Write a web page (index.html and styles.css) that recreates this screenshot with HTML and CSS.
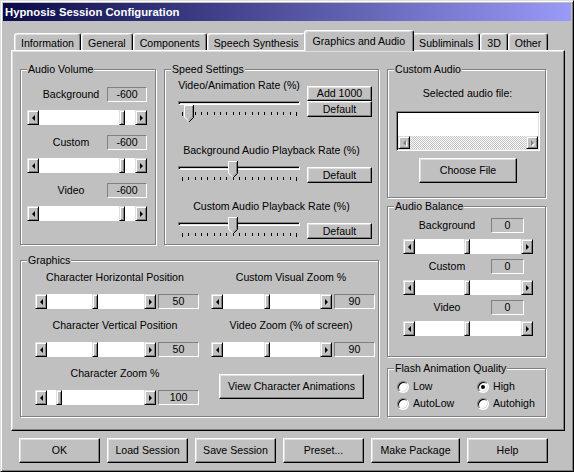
FILE: index.html
```html
<!DOCTYPE html>
<html>
<head>
<meta charset="utf-8">
<title>Hypnosis Session Configuration</title>
<link rel="stylesheet" href="styles.css">
</head>
<body>
<div class="window">
  <div class="titlebar">Hypnosis Session Configuration</div>
  <div class="dialog">
    <div class="tabs">
      <div class="tab">Information</div>
      <div class="tab">General</div>
      <div class="tab">Components</div>
      <div class="tab">Speech Synthesis</div>
      <div class="tab active">Graphics and Audio</div>
      <div class="tab">Subliminals</div>
      <div class="tab">3D</div>
      <div class="tab">Other</div>
    </div>
    <div class="panel">
      <div class="col-left">
        <div class="row-top">
          <div class="group volume">
            <span class="legend">Audio Volume</span>
            <div class="vol-item">
              <div class="vol-head"><span class="vol-label">Background</span><span class="val">-600</span></div>
              <div class="hscroll w120"><span class="sbtn sl"></span><span class="track"><span class="thumb" style="margin-left:80px"></span></span><span class="sbtn sr"></span></div>
            </div>
            <div class="vol-item">
              <div class="vol-head"><span class="vol-label">Custom</span><span class="val">-600</span></div>
              <div class="hscroll w120"><span class="sbtn sl"></span><span class="track"><span class="thumb" style="margin-left:80px"></span></span><span class="sbtn sr"></span></div>
            </div>
            <div class="vol-item">
              <div class="vol-head"><span class="vol-label">Video</span><span class="val">-600</span></div>
              <div class="hscroll w120"><span class="sbtn sl"></span><span class="track"><span class="thumb" style="margin-left:80px"></span></span><span class="sbtn sr"></span></div>
            </div>
          </div>
          <div class="group speed">
            <span class="legend">Speed Settings</span>
            <div class="sp-grid">
              <div>
                <div class="sp-label">Video/Animation Rate (%)</div>
                <div class="track-area">
                  <div class="channel"></div>
                  <svg class="ticks" width="116" height="4" viewBox="0 0 116 4"><path d="M0.5 0v4M6.5 0v3M13.5 0v3M19.5 0v3M25.5 0v3M32.5 0v3M38.5 0v3M44.5 0v3M51.5 0v3M57.5 0v3M63.5 0v3M70.5 0v3M76.5 0v3M82.5 0v3M89.5 0v3M95.5 0v3M101.5 0v3M108.5 0v3M114.5 0v4" stroke="#000"/></svg>
                  <svg class="tthumb" style="left:9px" width="10" height="17" viewBox="0 0 10 17"><path d="M0 0H10V12L5 17L0 12Z" fill="#c0c0c0"/><path d="M0.5 12.5V0.5H9" fill="none" stroke="#fff"/><path d="M0.5 12L5 16.5" fill="none" stroke="#fff"/><path d="M9.5 0V12.5L5 17" fill="none" stroke="#000"/><path d="M8.5 1V12L5 15.5" fill="none" stroke="#808080"/></svg>
                </div>
              </div>
              <div class="btn-stack">
                <div class="btn b15">Add 1000</div>
                <div class="btn b16">Default</div>
              </div>
            </div>
            <div class="sp-row">
              <div class="sp-label">Background Audio Playback Rate (%)</div>
              <div class="sp-grid">
                <div class="track-area">
                  <div class="channel"></div>
                  <svg class="ticks" width="116" height="4" viewBox="0 0 116 4"><path d="M0.5 0v4M6.5 0v3M13.5 0v3M19.5 0v3M25.5 0v3M32.5 0v3M38.5 0v3M44.5 0v3M51.5 0v3M57.5 0v3M63.5 0v3M70.5 0v3M76.5 0v3M82.5 0v3M89.5 0v3M95.5 0v3M101.5 0v3M108.5 0v3M114.5 0v4" stroke="#000"/></svg>
                  <svg class="tthumb" style="left:53px" width="10" height="17" viewBox="0 0 10 17"><path d="M0 0H10V12L5 17L0 12Z" fill="#c0c0c0"/><path d="M0.5 12.5V0.5H9" fill="none" stroke="#fff"/><path d="M0.5 12L5 16.5" fill="none" stroke="#fff"/><path d="M9.5 0V12.5L5 17" fill="none" stroke="#000"/><path d="M8.5 1V12L5 15.5" fill="none" stroke="#808080"/></svg>
                </div>
                <div class="btn-single"><div class="btn b16">Default</div></div>
              </div>
            </div>
            <div class="sp-row">
              <div class="sp-label">Custom Audio Playback Rate (%)</div>
              <div class="sp-grid">
                <div class="track-area">
                  <div class="channel"></div>
                  <svg class="ticks" width="116" height="4" viewBox="0 0 116 4"><path d="M0.5 0v4M6.5 0v3M13.5 0v3M19.5 0v3M25.5 0v3M32.5 0v3M38.5 0v3M44.5 0v3M51.5 0v3M57.5 0v3M63.5 0v3M70.5 0v3M76.5 0v3M82.5 0v3M89.5 0v3M95.5 0v3M101.5 0v3M108.5 0v3M114.5 0v4" stroke="#000"/></svg>
                  <svg class="tthumb" style="left:53px" width="10" height="17" viewBox="0 0 10 17"><path d="M0 0H10V12L5 17L0 12Z" fill="#c0c0c0"/><path d="M0.5 12.5V0.5H9" fill="none" stroke="#fff"/><path d="M0.5 12L5 16.5" fill="none" stroke="#fff"/><path d="M9.5 0V12.5L5 17" fill="none" stroke="#000"/><path d="M8.5 1V12L5 15.5" fill="none" stroke="#808080"/></svg>
                </div>
                <div class="btn-single"><div class="btn b16">Default</div></div>
              </div>
            </div>
          </div>
        </div>
        <div class="group graphics">
          <span class="legend">Graphics</span>
          <div class="g-cell">
            <div class="g-label">Character Horizontal Position</div>
            <div class="g-ctrl"><div class="hscroll"><span class="sbtn sl"></span><span class="track"><span class="thumb" style="margin-left:45px"></span></span><span class="sbtn sr"></span></div><span class="val">50</span></div>
          </div>
          <div class="g-cell">
            <div class="g-label">Custom Visual Zoom %</div>
            <div class="g-ctrl"><div class="hscroll"><span class="sbtn sl"></span><span class="track"><span class="thumb" style="margin-left:41px"></span></span><span class="sbtn sr"></span></div><span class="val">90</span></div>
          </div>
          <div class="g-cell">
            <div class="g-label">Character Vertical Position</div>
            <div class="g-ctrl"><div class="hscroll"><span class="sbtn sl"></span><span class="track"><span class="thumb" style="margin-left:45px"></span></span><span class="sbtn sr"></span></div><span class="val">50</span></div>
          </div>
          <div class="g-cell">
            <div class="g-label">Video Zoom (% of screen)</div>
            <div class="g-ctrl"><div class="hscroll"><span class="sbtn sl"></span><span class="track"><span class="thumb" style="margin-left:41px"></span></span><span class="sbtn sr"></span></div><span class="val">90</span></div>
          </div>
          <div class="g-cell">
            <div class="g-label">Character Zoom %</div>
            <div class="g-ctrl"><div class="hscroll"><span class="sbtn sl"></span><span class="track"><span class="thumb" style="margin-left:9px"></span></span><span class="sbtn sr"></span></div><span class="val">100</span></div>
          </div>
          <div class="g-btn-cell">
            <div class="btn view-btn">View Character Animations</div>
          </div>
        </div>
      </div>
      <div class="col-right">
        <div class="group custom">
          <span class="legend">Custom Audio</span>
          <div class="ca-label">Selected audio file:</div>
          <div class="listbox">
            <div class="hscroll lb-scroll"><span class="sbtn sl dis"></span><span class="track dither"></span><span class="sbtn sr dis"></span></div>
          </div>
          <div class="btn choose-btn">Choose File</div>
        </div>
        <div class="group balance">
          <span class="legend">Audio Balance</span>
          <div class="bal-item">
            <div class="bal-head"><span class="bal-label">Background</span><span class="val">0</span></div>
            <div class="hscroll w130"><span class="sbtn sl"></span><span class="track"><span class="thumb" style="margin-left:49px"></span></span><span class="sbtn sr"></span></div>
          </div>
          <div class="bal-item">
            <div class="bal-head"><span class="bal-label">Custom</span><span class="val">0</span></div>
            <div class="hscroll w130"><span class="sbtn sl"></span><span class="track"><span class="thumb" style="margin-left:49px"></span></span><span class="sbtn sr"></span></div>
          </div>
          <div class="bal-item">
            <div class="bal-head"><span class="bal-label">Video</span><span class="val">0</span></div>
            <div class="hscroll w130"><span class="sbtn sl"></span><span class="track"><span class="thumb" style="margin-left:49px"></span></span><span class="sbtn sr"></span></div>
          </div>
        </div>
        <div class="group flash">
          <span class="legend">Flash Animation Quality</span>
          <label class="radio-item"><span class="radio"></span>Low</label>
          <label class="radio-item"><span class="radio on"></span>High</label>
          <label class="radio-item"><span class="radio"></span>AutoLow</label>
          <label class="radio-item"><span class="radio"></span>Autohigh</label>
        </div>
      </div>
    </div>
    <div class="buttons">
      <div class="btn">OK</div>
      <div class="btn">Load Session</div>
      <div class="btn">Save Session</div>
      <div class="btn">Preset...</div>
      <div class="btn wide">Make Package</div>
      <div class="btn">Help</div>
    </div>
  </div>
</div>
</body>
</html>
```
FILE: styles.css
```css
* { box-sizing: border-box; }
html, body { margin: 0; padding: 0; }
body {
  width: 574px; height: 472px; overflow: hidden;
  background: #c0c0c0;
  font-family: "Liberation Sans", Arial, sans-serif;
  font-size: 10.6px; line-height: 13px; color: #000;
}
.window {
  width: 574px; height: 472px; padding: 2px;
  border: 1px solid; border-color: #dfdfdf #000 #000 #dfdfdf;
  box-shadow: inset 1px 1px #fff, inset -1px -1px #808080;
  background: #c0c0c0;
}
.titlebar {
  height: 18px; padding-left: 2px;
  background: linear-gradient(to right, #0a0a48, #9a9af8);
  color: #fff; font-weight: bold; font-size: 11.3px; line-height: 18px;
  white-space: nowrap;
}
.dialog { padding: 9px 0 0 8px; }

/* tabs */
.tabs { display: flex; align-items: flex-end; height: 20px; padding-left: 3px; }
.tab {
  height: 17px; padding: 2px 6px 0;
  border: 1px solid; border-bottom: 0;
  border-color: #fff #000 transparent #fff;
  border-radius: 3px 3px 0 0;
  box-shadow: inset -1px 0 #808080, inset 1px 1px #dfdfdf;
  line-height: 14px; white-space: nowrap; background: #c0c0c0;
}
.tab.active {
  height: 21px; margin: 0 -2px -1px; padding: 3px 8px 0;
  position: relative; z-index: 1;
}

/* panel */
.panel {
  width: 554px; height: 381px;
  display: flex; gap: 8px; padding: 18px 0 0 8px;
  border: 1px solid; border-color: #fff #000 #000 #fff;
  box-shadow: inset -1px -1px #808080, inset 1px 1px #dfdfdf;
}
.col-left { width: 359px; display: flex; flex-direction: column; gap: 15px; }
.row-top { display: flex; gap: 8px; height: 176px; }
.col-right { width: 159px; display: flex; flex-direction: column; }

/* group box */
.group {
  position: relative; flex: none;
  border: 1px solid #808080;
  box-shadow: 1px 1px 0 #fff, inset 1px 1px 0 #fff;
}
.legend {
  position: absolute; top: -7px; left: 6px; padding: 0 1px;
  background: #c0c0c0; line-height: 13px; white-space: nowrap;
}

/* common controls */
.val {
  height: 15px; border: 1px solid; border-color: #808080 #fff #fff #808080;
  text-align: center; line-height: 13px;
}
.btn {
  background: #c0c0c0;
  border: 1px solid; border-color: #fff #000 #000 #fff;
  box-shadow: inset -1px -1px #808080, inset 1px 1px #dfdfdf;
  display: flex; align-items: center; justify-content: center;
  white-space: nowrap;
}
.hscroll { display: flex; height: 15px; }
.hscroll.w120 { width: 120px; }
.hscroll.w130 { width: 130px; }
.sbtn {
  width: 12px; flex: none; height: 100%;
  background: #c0c0c0;
  border: 1px solid; border-color: #dfdfdf #000 #000 #dfdfdf;
  box-shadow: inset 1px 1px #fff, inset -1px -1px #808080;
  display: flex; align-items: center; justify-content: center;
}
.sbtn::before {
  content: ""; width: 0; height: 0;
  border-top: 3px solid transparent; border-bottom: 3px solid transparent;
}
.sbtn.sl::before { border-right: 3px solid #000; }
.sbtn.sr::before { border-left: 3px solid #000; }
.sbtn.dis.sl::before { border-right-color: #808080; filter: drop-shadow(1px 1px 0 #fff); }
.sbtn.dis.sr::before { border-left-color: #808080; filter: drop-shadow(1px 1px 0 #fff); }
.track { flex: 1; display: flex; background: #fff; }
.track.dither {
  background: conic-gradient(#fff 25%, #c0c0c0 0 50%, #fff 0 75%, #c0c0c0 0);
  background-size: 2px 2px;
}
.thumb {
  width: 6px; height: 100%; flex: none;
  background: #c0c0c0;
  border: 1px solid; border-color: #dfdfdf #000 #000 #dfdfdf;
  box-shadow: inset 1px 1px #fff, inset -1px -1px #808080;
}

/* audio volume */
.volume {
  width: 136px; height: 176px; padding: 17px 0 0 6px;
  display: flex; flex-direction: column; gap: 10px;
}
.vol-item { display: flex; flex-direction: column; gap: 8px; }
.vol-head { display: grid; grid-template-columns: 80px 40px; height: 15px; align-items: center; }
.vol-label { text-align: center; padding-left: 8px; white-space: nowrap; }

/* speed settings */
.speed { width: 215px; height: 176px; padding-top: 8px; }
.sp-grid { display: grid; grid-template-columns: 128px 65px; column-gap: 4px; padding-left: 10px; }
.sp-row { margin-top: 16px; }
.sp-label { height: 14px; line-height: 14px; text-align: center; white-space: nowrap; }
.track-area { position: relative; height: 26px; }
.channel {
  margin: 9px 3px 0; height: 4px;
  border: 1px solid; border-color: #808080 #fff #fff #808080;
  box-shadow: inset 1px 1px #000; background: #dfdfdf;
}
.ticks { display: block; margin: 7px 0 0 7px; }
.tthumb { position: absolute; top: 4px; }
.btn-stack { padding-top: 8px; display: flex; flex-direction: column; }
.btn-single { padding-top: 10px; }
.b15 { height: 15px; }
.b16 { height: 16px; }

/* graphics */
.graphics {
  width: 359px; height: 157px; padding: 9px 0 0 14px;
  display: grid; grid-template-columns: 164px 164px;
  column-gap: 12px; row-gap: 9px; align-content: start;
}
.g-cell { display: flex; flex-direction: column; gap: 10px; }
.g-label { height: 14px; line-height: 14px; text-align: center; padding-right: 4px; white-space: nowrap; }
.g-ctrl { display: flex; gap: 2px; height: 15px; }
.g-ctrl .hscroll { width: 121px; }
.g-ctrl .val { width: 41px; }
.g-btn-cell { padding: 8px 0 0 8px; }
.view-btn { width: 145px; height: 25px; }

/* custom audio */
.custom { width: 159px; height: 129px; padding-top: 16px; }
.ca-label { height: 14px; line-height: 14px; text-align: center; padding-left: 2px; white-space: nowrap; }
.listbox {
  margin: 11px 0 0 8px; width: 144px; height: 40px; padding: 1px;
  border: 1px solid; border-color: #808080 #fff #fff #808080;
  box-shadow: inset 1px 1px #000, inset -1px -1px #dfdfdf;
  background: #fff;
  display: flex; flex-direction: column; justify-content: flex-end;
}
.lb-scroll { height: 13px; }
.choose-btn { margin: 7px 0 0 31px; width: 98px; height: 25px; }

/* audio balance */
.balance {
  width: 159px; height: 151px; margin-top: 8px; padding: 11px 0 0 15px;
  display: flex; flex-direction: column; gap: 5px;
}
.bal-item { display: flex; flex-direction: column; gap: 6px; }
.bal-head { display: grid; grid-template-columns: 88px 33px; height: 15px; align-items: center; }
.bal-label { text-align: center; white-space: nowrap; }

/* flash */
.flash {
  width: 159px; height: 49px; margin-top: 11px; padding: 9px 0 0 9px;
  display: grid; grid-template-columns: 80px 70px; grid-auto-rows: 17px;
}
.radio-item { display: flex; align-items: center; gap: 4px; white-space: nowrap; }
.radio {
  position: relative; width: 12px; height: 12px; flex: none;
  border-radius: 50%; border: 1px solid;
  border-color: #808080 #fff #fff #808080;
  box-shadow: inset 1px 1px #000, inset -1px -1px #dfdfdf;
  background: #fff;
}
.radio.on::after {
  content: ""; position: absolute; left: 3px; top: 3px;
  width: 4px; height: 4px; border-radius: 50%; background: #000;
}

/* bottom buttons */
.buttons { display: flex; gap: 7px; margin-top: 7px; padding-left: 8px; }
.buttons .btn { width: 81px; height: 25px; }
.buttons .btn.wide { width: 89px; }
```
